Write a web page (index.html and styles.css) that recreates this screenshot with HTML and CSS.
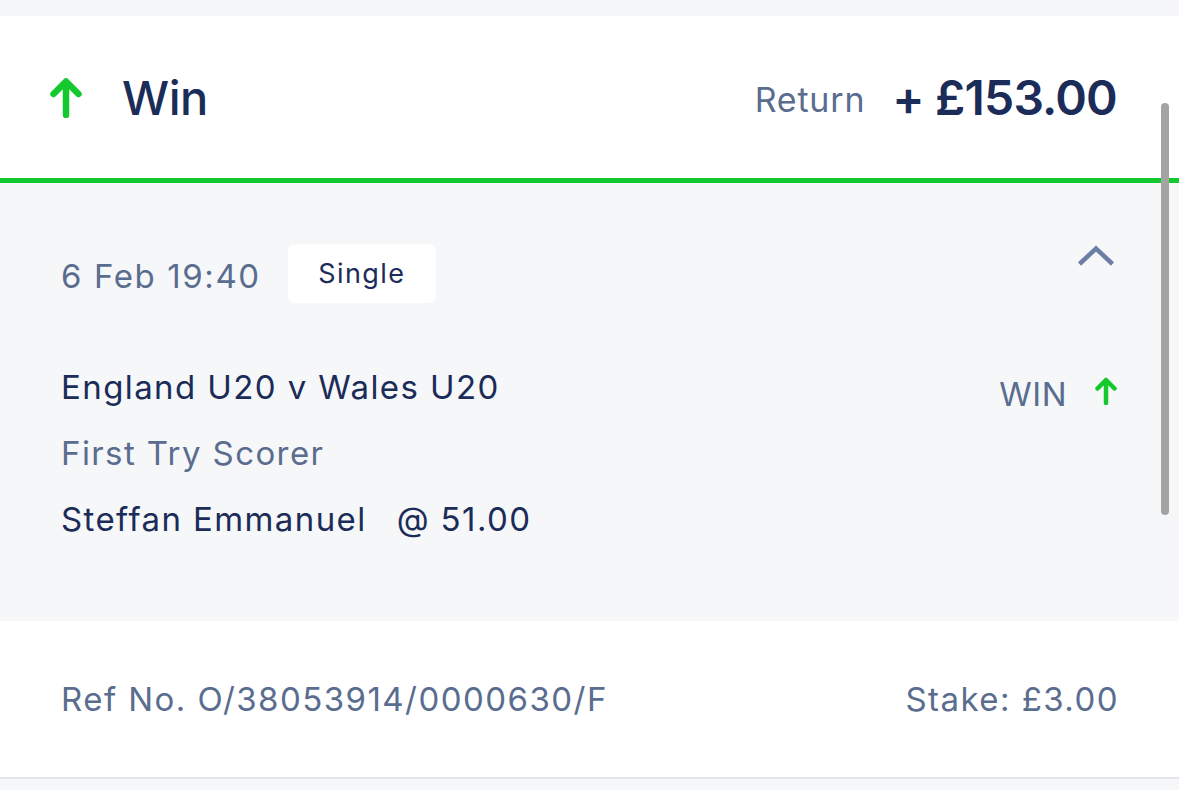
FILE: index.html
```html
<!DOCTYPE html>
<html>
<head>
<meta charset="utf-8">
<link rel="stylesheet" href="styles.css">
</head>
<body>
<div class="top-gap"></div>
<div class="card">
  <header class="header">
    <div class="result">
      <svg class="arrow-big" width="32" height="40" viewBox="0 0 32 40"><path d="M16 37 V4 M3.5 16 L16 3.5 L28.5 16" fill="none" stroke="#13c92d" stroke-width="6.5" stroke-linecap="round" stroke-linejoin="round"/></svg>
      <span class="result-label">Win</span>
    </div>
    <div class="return">
      <span class="return-label">Return</span>
      <span class="return-value">+ £153.00</span>
    </div>
  </header>
  <section class="details">
    <div class="meta-row">
      <div class="meta">
        <span class="date">6 Feb 19:40</span>
        <span class="badge">Single</span>
      </div>
      <svg class="chevron" width="38" height="22" viewBox="0 0 38 22"><path d="M2.5 19 L19 3.5 L35.5 19" fill="none" stroke="#6b7ea3" stroke-width="4.5"/></svg>
    </div>
    <div class="selection">
      <div class="lines">
        <div class="event">England U20 v Wales U20</div>
        <div class="market">First Try Scorer</div>
        <div class="pick"><span>Steffan Emmanuel</span><span class="odds">@ 51.00</span></div>
      </div>
      <div class="outcome">
        <span>WIN</span>
        <svg width="22" height="28" viewBox="0 0 22 28"><path d="M11 26 V3 M2.5 11.5 L11 3 L19.5 11.5" fill="none" stroke="#13c92d" stroke-width="4.5" stroke-linecap="round" stroke-linejoin="round"/></svg>
      </div>
    </div>
  </section>
  <footer class="footer">
    <span>Ref No. O/38053914/0000630/F</span>
    <span class="stake">Stake: £3.00</span>
  </footer>
</div>
<div class="scrollbar"></div>
</body>
</html>
```

FILE: styles.css
```css
html, body {
  margin: 0;
  padding: 0;
}
body {
  background: #f6f7f9;
  font-family: Inter, "Noto Sans", "Liberation Sans", sans-serif;
  color: #1b2c58;
  width: 1179px;
  height: 790px;
  overflow: hidden;
  position: relative;
}
.top-gap {
  height: 16px;
}
.header {
  background: #ffffff;
  box-sizing: border-box;
  display: flex;
  align-items: center;
  justify-content: space-between;
  padding: 0 62px 0 50px;
  border-bottom: 5px solid #13c92d;
  height: 167px;
}
.result {
  display: flex;
  align-items: center;
  gap: 40px;
}
.arrow-big {
  display: block;
  margin-top: 1px;
}
.result-label {
  font-size: 47px;
  font-weight: 500;
  letter-spacing: -0.5px;
}
.return {
  display: flex;
  align-items: center;
  gap: 27px;
}
.return-label {
  font-size: 34px;
  color: #5a6d8f;
  letter-spacing: 0.8px;
  margin-top: 4px;
}
.return-value {
  font-size: 48px;
  font-weight: 600;
  letter-spacing: -0.8px;
}
.details {
  background: #f6f7f9;
  height: 438px;
  box-sizing: border-box;
  padding: 61px 62px 0 61px;
  letter-spacing: 1.4px;
}
.meta-row {
  display: flex;
  justify-content: space-between;
  align-items: flex-start;
}
.meta {
  display: flex;
  align-items: center;
  gap: 27px;
}
.date {
  font-size: 33px;
  color: #5a6d8f;
  padding-top: 5px;
  letter-spacing: 1.6px;
}
.badge {
  background: #ffffff;
  border-radius: 7px;
  height: 59px;
  width: 148px;
  display: flex;
  align-items: center;
  justify-content: center;
  font-size: 27px;
  letter-spacing: 1.4px;
  color: #1b2c58;
}
.chevron {
  display: block;
  margin-top: 1px;
  margin-right: 2px;
}
.selection {
  display: flex;
  justify-content: space-between;
  align-items: flex-start;
  margin-top: 51px;
}
.lines {
  font-size: 33px;
  line-height: 66px;
}
.market {
  color: #5a6d8f;
}
.pick {
  display: flex;
  gap: 30px;
}
.outcome {
  display: flex;
  align-items: center;
  gap: 28px;
  height: 80px;
  font-size: 33px;
  letter-spacing: 0.5px;
  color: #5a6d8f;
}
.outcome svg {
  display: block;
  margin-top: -6px;
}
.footer {
  background: #ffffff;
  height: 158px;
  box-sizing: border-box;
  border-bottom: 2px solid #e2e4e8;
  display: flex;
  align-items: center;
  justify-content: space-between;
  padding: 0 62px 0 61px;
  font-size: 33px;
  letter-spacing: 1.45px;
  color: #5a6d8f;
}
.stake {
  margin-right: -2px;
}
.scrollbar {
  position: absolute;
  left: 1161px;
  top: 103px;
  width: 8px;
  height: 412px;
  border-radius: 4px;
  background: #a3a3a3;
}
```
